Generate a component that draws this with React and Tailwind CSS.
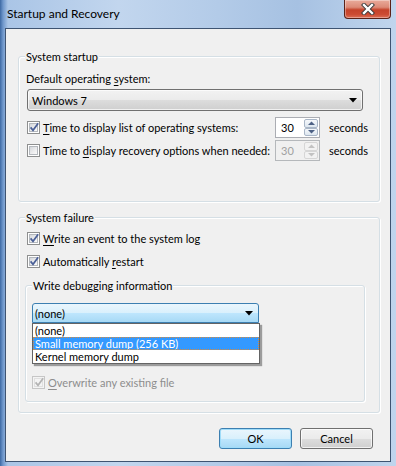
import React from "react";

function Check({ checked, disabled }) {
  return (
    <span
      className={
        disabled
          ? "relative w-[13px] h-[13px] shrink-0 border border-[#c6c6c6] bg-[#f4f4f4] p-[1px] flex"
          : "relative w-[13px] h-[13px] shrink-0 border border-[#8e8f8f] bg-white p-[1px] flex"
      }
    >
      <span
        className={
          disabled
            ? "flex-1 border border-[#e0e0e0] bg-[#f4f4f4]"
            : "flex-1 border border-[#b4b8bd] bg-[linear-gradient(135deg,#d4d7db_0%,#eeeeef_60%,#fbfbfb_100%)]"
        }
      />
      {checked && (
        <svg
          className="absolute left-[0px] top-[-1px]"
          width="13"
          height="13"
          viewBox="0 0 13 13"
        >
          <path
            d="M2.6 6.4 L5 9.3 L10.2 2.3"
            fill="none"
            stroke={disabled ? "#b3b3b3" : "#4a5f97"}
            strokeWidth="1.7"
          />
        </svg>
      )}
    </span>
  );
}

function Spin({ disabled }) {
  return (
    <div
      className={
        disabled
          ? "w-[45px] h-[21px] border border-[#b5b8bb] bg-[#f0f0f0] flex"
          : "w-[45px] h-[21px] border border-[#abadb3] bg-white flex"
      }
    >
      <div
        className={
          disabled
            ? "flex-1 pl-[5px] flex items-center text-[#a0a0a0]"
            : "flex-1 pl-[5px] flex items-center text-black"
        }
      >
        30
      </div>
      <div className="w-[16px] flex flex-col p-[1px] gap-0">
        {[0, 1].map((i) => (
          <div
            key={i}
            className={
              disabled
                ? "flex-1 border border-[#d6d6d6] rounded-[2px] bg-[#f2f2f2] flex items-center justify-center"
                : "flex-1 border border-[#a9b6c7] rounded-[2px] bg-[linear-gradient(to_bottom,#f5f8fb,#dde6ef)] flex items-center justify-center"
            }
          >
            <svg width="7" height="4" viewBox="0 0 7 4">
              <path
                d={i === 0 ? "M0 4 L3.5 0.5 L7 4 Z" : "M0 0 L3.5 3.5 L7 0 Z"}
                fill={disabled ? "#c2c2c2" : "#4d6185"}
              />
            </svg>
          </div>
        ))}
      </div>
    </div>
  );
}

function Arrow() {
  return (
    <svg width="8" height="5" viewBox="0 0 8 5">
      <path d="M0 0 L8 0 L4 4.5 Z" fill="#000" />
    </svg>
  );
}

function Group({ label, className, children }) {
  return (
    <div
      className={
        "relative border border-[#d5dfe5] rounded-[3px] shadow-[inset_1px_1px_0_#ffffff,1px_1px_0_#ffffff] " +
        className
      }
    >
      <span className="absolute top-[-8px] left-[6px] px-[1px] bg-[#f0f0f0] leading-[15px] whitespace-nowrap">
        {label}
      </span>
      {children}
    </div>
  );
}

export default function App() {
  return (
    <div className="relative w-[396px] h-[466px] overflow-hidden flex flex-col font-['Lato','Noto_Sans',sans-serif] text-[11px] leading-[15px] text-black whitespace-nowrap bg-[linear-gradient(to_right,#3d69a3_0px,#6f97cb_3px,#aac5e6_8px,#c2d6ee_30%,#b3cbe8_55%,#a6c1e2_75%,#c0d5ed_100%)]">
      {/* title bar */}
      <div className="h-[28px] flex items-start justify-between pl-[7px] pr-[5px]">
        <span className="mt-[6px] text-[12px] text-black">Startup and Recovery</span>
        <div className="w-[47px] h-[19px] rounded-b-[4px] border border-t-0 border-[#5a2218] bg-[linear-gradient(to_bottom,#e9ab9b_0%,#dc8a77_40%,#c5422a_55%,#cc4b32_80%,#dc6e55_100%)] flex items-center justify-center shadow-[inset_0_0_0_1px_rgba(255,255,255,0.35)]">
          <svg width="14" height="12" viewBox="0 0 14 12">
            <path
              d="M3 2 L11 10 M11 2 L3 10"
              stroke="#3a3a3a"
              strokeWidth="4.2"
              strokeLinecap="square"
            />
            <path
              d="M3 2 L11 10 M11 2 L3 10"
              stroke="#ffffff"
              strokeWidth="2.4"
              strokeLinecap="square"
            />
          </svg>
        </div>
      </div>

      {/* client area */}
      <div className="mx-[5px] h-[434px] border border-[#3e5472] bg-[#f0f0f0] flex flex-col pl-[12px] pt-[27px]">
        <Group label="System startup" className="w-[362px] h-[146px] pt-[14px] pl-[8px]">
          <div className="-ml-[1px]">
            Default operating <span className="underline underline-offset-2">s</span>ystem:
          </div>
          <div className="mt-[3px] w-[336px] h-[22px] border border-[#707070] rounded-[3px] bg-[linear-gradient(to_bottom,#f2f2f2_0%,#ebebeb_50%,#dddddd_51%,#cfcfcf_100%)] flex items-center justify-between pl-[4px] pr-[5px] shadow-[inset_0_0_0_1px_rgba(255,255,255,0.7)]">
            <span>Windows 7</span>
            <Arrow />
          </div>
          <div className="mt-[6px] h-[21px] flex items-center">
            <div className="w-[248px] flex items-center gap-[3px]">
              <Check checked />
              <span>
                <span className="underline underline-offset-2">T</span>ime to display list of operating systems:
              </span>
            </div>
            <Spin />
            <span className="ml-[9px]">seconds</span>
          </div>
          <div className="mt-[2px] h-[21px] flex items-center">
            <div className="w-[248px] flex items-center gap-[3px]">
              <Check />
              <span>
                Time to <span className="underline underline-offset-2">d</span>isplay recovery options when needed:
              </span>
            </div>
            <Spin disabled />
            <span className="ml-[9px]">seconds</span>
          </div>
        </Group>

        <Group label="System failure" className="mt-[15px] w-[362px] h-[196px] pt-[13px] pl-[8px]">
          <div className="h-[15px] flex items-center gap-[3px]">
            <Check checked />
            <span>
              <span className="underline underline-offset-2">W</span>rite an event to the system log
            </span>
          </div>
          <div className="mt-[8px] h-[15px] flex items-center gap-[3px]">
            <Check checked />
            <span>
              Automatically <span className="underline underline-offset-2">r</span>estart
            </span>
          </div>
          <Group
            label="Write debugging information"
            className="mt-[16px] -ml-[2px] w-[340px] h-[117px] pt-[17px] pl-[6px]"
          >
            <div className="relative w-[227px]">
              <div className="h-[20px] border border-[#3c7fb1] rounded-t-[3px] bg-[linear-gradient(to_bottom,#eaf6fd_0%,#d9f0fc_50%,#bee6fd_51%,#a7d9f5_100%)] flex items-center justify-between pl-[2px] pr-[5px]">
                <span>(none)</span>
                <Arrow />
              </div>
              <div className="absolute left-0 top-full w-[228px] border border-[#646464] bg-white shadow-[2px_2px_1px_rgba(0,0,0,0.35)] z-10">
                <div className="h-[13px] leading-[13px] pl-[2px]">(none)</div>
                <div className="h-[13px] leading-[13px] pl-[2px] bg-[#3399ff] text-white outline outline-1 outline-dotted outline-[#d68a3c] -outline-offset-1">
                  Small memory dump (256 KB)
                </div>
                <div className="h-[13px] leading-[13px] pl-[2px]">Kernel memory dump</div>
              </div>
            </div>
            <div className="mt-[52px] h-[15px] flex items-center gap-[3px] text-[#8d8d8d]">
              <Check checked disabled />
              <span>
                <span className="underline underline-offset-2">O</span>verwrite any existing file
              </span>
            </div>
          </Group>
        </Group>

        <div className="mt-[15px] ml-[201px] flex gap-[8px]">
          <button className="w-[73px] h-[21px] border border-[#3c7fb1] rounded-[3px] bg-[linear-gradient(to_bottom,#eaf6fd_0%,#d9f0fc_50%,#bee6fd_51%,#a7d9f5_100%)] shadow-[inset_0_0_0_1px_#9fdcf9] flex items-center justify-center text-black">
            OK
          </button>
          <button className="w-[73px] h-[21px] border border-[#707070] rounded-[3px] bg-[linear-gradient(to_bottom,#f2f2f2_0%,#ebebeb_50%,#dddddd_51%,#cfcfcf_100%)] shadow-[inset_0_0_0_1px_rgba(255,255,255,0.7)] flex items-center justify-center text-black">
            Cancel
          </button>
        </div>
      </div>
    </div>
  );
}
